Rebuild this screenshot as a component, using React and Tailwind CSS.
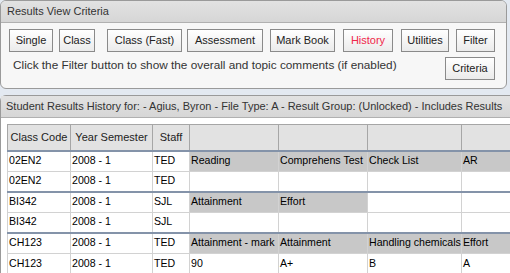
import React from 'react';

const buttons = [
  { label: 'Single', cls: 'w-[44px] ml-[8px]' },
  { label: 'Class', cls: 'w-[36px] ml-[6px]' },
  { label: 'Class (Fast)', cls: 'w-[75px] ml-[12px]' },
  { label: 'Assessment', cls: 'w-[76px] ml-[5px]' },
  { label: 'Mark Book', cls: 'w-[65px] ml-[7px]' },
  { label: 'History', cls: 'w-[50px] ml-[8px] text-[#f0284a]' },
  { label: 'Utilities', cls: 'w-[48px] ml-[8px]' },
  { label: 'Filter', cls: 'w-[39px] ml-[7px]' },
];

const rows = [
  { code: '02EN2', year: '2008 - 1', staff: 'TED', cells: ['Reading', 'Comprehens Test', 'Check List', 'AR'], grey: [true, true, true, true], first: true },
  { code: '02EN2', year: '2008 - 1', staff: 'TED', cells: ['', '', '', ''], grey: [false, false, false, false] },
  { code: 'BI342', year: '2008 - 1', staff: 'SJL', cells: ['Attainment', 'Effort', '', ''], grey: [true, true, false, false], first: true },
  { code: 'BI342', year: '2008 - 1', staff: 'SJL', cells: ['', '', '', ''], grey: [false, false, false, false] },
  { code: 'CH123', year: '2008 - 1', staff: 'TED', cells: ['Attainment - mark', 'Attainment', 'Handling chemicals', 'Effort'], grey: [true, true, true, true], first: true },
  { code: 'CH123', year: '2008 - 1', staff: 'TED', cells: ['90', 'A+', 'B', 'A'], grey: [false, false, false, false] },
];

const Btn = ({ label, cls }) => (
  <button className={`h-[23px] border border-[#8a8a8a] bg-gradient-to-b from-white to-[#ebebeb] text-[11px] text-[#222] leading-none ${cls}`}>
    {label}
  </button>
);

export default function App() {
  return (
    <div className="w-[510px] h-[273px] overflow-hidden bg-[#e3e9f1] text-[11px] font-['Liberation_Sans',Arial,sans-serif]">
      <div className="w-[507px] h-[89px] rounded-[6px] border border-[#9a9a9a] bg-[#f7f7f7] overflow-hidden">
        <div className="h-[22px] bg-gradient-to-b from-[#e2e2e2] to-[#d6d6d6] border-b border-[#b0b0b0] px-[6px] flex items-center text-[#333]">
          Results View Criteria
        </div>
        <div className="flex pt-[6px]">
          {buttons.map((b) => (
            <Btn key={b.label} {...b} />
          ))}
        </div>
        <div className="flex items-start justify-between pt-[4px] pr-[11px]">
          <span className="pl-[12px] text-[11.8px] leading-[18px] text-[#333]">
            Click the Filter button to show the overall and topic comments (if enabled)
          </span>
          <Btn label="Criteria" cls="w-[50px] h-[22px] mt-[1px]" />
        </div>
      </div>

      <div className="mt-[6px] w-[540px] rounded-tl-[6px] border border-[#9a9a9a] bg-white">
        <div className="h-[22px] bg-gradient-to-b from-[#e2e2e2] to-[#d6d6d6] border-b border-[#b0b0b0] px-[5px] flex items-center text-[#333] whitespace-nowrap">
          Student Results History for: - Agius, Byron - File Type: A - Result Group: (Unlocked) - Includes Results
        </div>
        <div className="pl-[6px] pt-[6px]">
          <table className="border-collapse table-fixed w-[530px] text-black text-[10.6px]">
            <colgroup>
              <col className="w-[63px]" />
              <col className="w-[82px]" />
              <col className="w-[37px]" />
              <col className="w-[89px]" />
              <col className="w-[89px]" />
              <col className="w-[94px]" />
              <col className="w-[76px]" />
            </colgroup>
            <thead>
              <tr className="h-[26px] bg-[#e2e2e2] text-[#222] text-[11px]">
                <th className="border border-[#a6a6a6] font-normal text-center">Class Code</th>
                <th className="border border-[#a6a6a6] font-normal text-center">Year Semester</th>
                <th className="border border-[#a6a6a6] font-normal text-center">Staff</th>
                <th className="border border-[#a6a6a6]"></th>
                <th className="border border-[#a6a6a6]"></th>
                <th className="border border-[#a6a6a6]"></th>
                <th className="border border-[#a6a6a6]"></th>
              </tr>
            </thead>
            <tbody>
              {rows.map((r, i) => (
                <tr
                  key={i}
                  className={r.first ? 'h-[21px] border-t-2 border-[#8493a9]' : 'h-[20px]'}
                >
                  <td className="border-x border-b border-[#d2d2d2] px-[1px] whitespace-nowrap">{r.code}</td>
                  <td className="border-x border-b border-[#d2d2d2] px-[1px] whitespace-nowrap">{r.year}</td>
                  <td className="border-x border-b border-[#d2d2d2] px-[1px] whitespace-nowrap">{r.staff}</td>
                  {r.cells.map((c, j) => (
                    <td
                      key={j}
                      className={`border-x border-b border-[#d2d2d2] px-[1px] whitespace-nowrap overflow-hidden ${r.grey[j] ? 'bg-[#c8c8c8]' : 'bg-white'}`}
                    >
                      {c}
                    </td>
                  ))}
                </tr>
              ))}
            </tbody>
          </table>
        </div>
      </div>
    </div>
  );
}
